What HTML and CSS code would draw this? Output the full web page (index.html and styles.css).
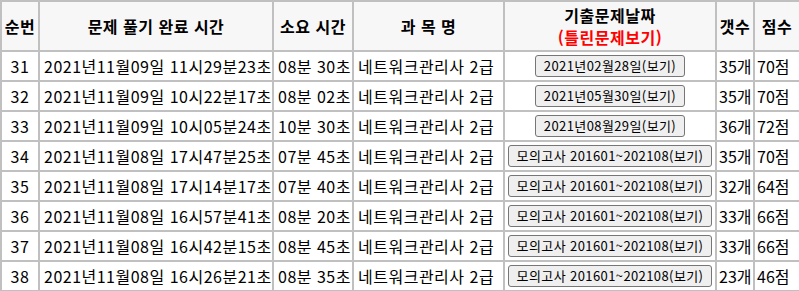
FILE: index.html
```html
<!DOCTYPE html>
<html lang="ko">
<head>
<meta charset="utf-8">
<link rel="stylesheet" href="styles.css">
</head>
<body>
<table class="grid">
  <colgroup>
    <col class="c-no"><col class="c-time"><col class="c-dur"><col class="c-subj"><col class="c-exam"><col class="c-cnt"><col class="c-score">
  </colgroup>
  <thead>
    <tr>
      <th>순번</th>
      <th>문제 풀기 완료 시간</th>
      <th>소요 시간</th>
      <th>과 목 명</th>
      <th><span class="line">기출문제날짜</span><span class="line red">(틀린문제보기)</span></th>
      <th>갯수</th>
      <th>점수</th>
    </tr>
  </thead>
  <tbody>
    <tr><td class="ctr">31</td><td>2021년11월09일 11시29분23초</td><td>08분 30초</td><td>네트워크관리사 2급</td><td class="ctr"><button class="btn">2021년02월28일(보기)</button></td><td class="num">35개</td><td class="num">70점</td></tr>
    <tr><td class="ctr">32</td><td>2021년11월09일 10시22분17초</td><td>08분 02초</td><td>네트워크관리사 2급</td><td class="ctr"><button class="btn">2021년05월30일(보기)</button></td><td class="num">35개</td><td class="num">70점</td></tr>
    <tr><td class="ctr">33</td><td>2021년11월09일 10시05분24초</td><td>10분 30초</td><td>네트워크관리사 2급</td><td class="ctr"><button class="btn">2021년08월29일(보기)</button></td><td class="num">36개</td><td class="num">72점</td></tr>
    <tr><td class="ctr">34</td><td>2021년11월08일 17시47분25초</td><td>07분 45초</td><td>네트워크관리사 2급</td><td class="ctr"><button class="btn">모의고사 201601~202108(보기)</button></td><td class="num">35개</td><td class="num">70점</td></tr>
    <tr><td class="ctr">35</td><td>2021년11월08일 17시14분17초</td><td>07분 40초</td><td>네트워크관리사 2급</td><td class="ctr"><button class="btn">모의고사 201601~202108(보기)</button></td><td class="num">32개</td><td class="num">64점</td></tr>
    <tr><td class="ctr">36</td><td>2021년11월08일 16시57분41초</td><td>08분 20초</td><td>네트워크관리사 2급</td><td class="ctr"><button class="btn">모의고사 201601~202108(보기)</button></td><td class="num">33개</td><td class="num">66점</td></tr>
    <tr><td class="ctr">37</td><td>2021년11월08일 16시42분15초</td><td>08분 45초</td><td>네트워크관리사 2급</td><td class="ctr"><button class="btn">모의고사 201601~202108(보기)</button></td><td class="num">33개</td><td class="num">66점</td></tr>
    <tr><td class="ctr">38</td><td>2021년11월08일 16시26분21초</td><td>08분 35초</td><td>네트워크관리사 2급</td><td class="ctr"><button class="btn">모의고사 201601~202108(보기)</button></td><td class="num">23개</td><td class="num">46점</td></tr>
  </tbody>
</table>
</body>
</html>
```
FILE: styles.css
```css
html, body {
  margin: 0;
  padding: 0;
  background: #ffffff;
}
body {
  font-family: "Noto Sans CJK KR", "Noto Sans", sans-serif;
  font-size: 16px;
  color: #000;
}
.grid {
  border-collapse: separate;
  border-spacing: 0;
  table-layout: fixed;
  width: 799px;
  border-top: 2px solid #c0c0c0;
  border-left: 2px solid #c0c0c0;
}
.c-no { width: 38px; }
.c-time { width: 234px; }
.c-dur { width: 80px; }
.c-subj { width: 151px; }
.c-exam { width: 212px; }
.c-cnt { width: 38px; }
.c-score { width: 46px; }
.grid th, .grid td {
  border-right: 2px solid #c0c0c0;
  border-bottom: 2px solid #c0c0c0;
  padding: 0 0 0 4px;
  white-space: nowrap;
  overflow: hidden;
  line-height: 18px;
  letter-spacing: 0.5px;
}
.grid th {
  background: #f7f7f7;
  font-weight: bold;
  text-align: center;
  height: 48px;
  padding: 0;
}
.line {
  display: block;
  line-height: 22px;
}
.grid td {
  height: 28px;
  text-align: left;
}
.grid td.ctr {
  text-align: center;
  padding: 0;
}
.grid td.num {
  padding-left: 2px;
  letter-spacing: 0;
}
.red { color: #ff0000; }
.btn {
  font-family: "Noto Sans CJK KR", "Noto Sans", sans-serif;
  font-size: 13px;
  line-height: 16px;
  letter-spacing: 0.4px;
  height: 22px;
  padding: 1px 8px;
  border: 1px solid #767676;
  border-radius: 3px;
  background: #efefef;
  color: #000;
}
```
